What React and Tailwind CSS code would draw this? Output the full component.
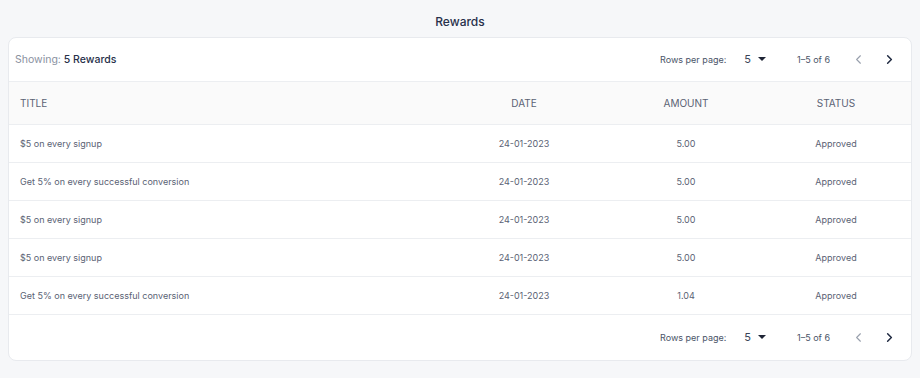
import { ChevronLeft, ChevronRight } from 'lucide-react'

const ROWS = [
  { title: '$5 on every signup', date: '24-01-2023', amount: '5.00', status: 'Approved' },
  { title: 'Get 5% on every successful conversion', date: '24-01-2023', amount: '5.00', status: 'Approved' },
  { title: '$5 on every signup', date: '24-01-2023', amount: '5.00', status: 'Approved' },
  { title: '$5 on every signup', date: '24-01-2023', amount: '5.00', status: 'Approved' },
  { title: 'Get 5% on every successful conversion', date: '24-01-2023', amount: '1.04', status: 'Approved' },
]

// ── Pagination controls ──────────────────────────────────────────────────────
function Pager() {
  return (
    <div className="flex items-center text-[9px] text-[#4a5468]">
      <span>Rows per page:</span>
      <span className="ml-[18px] flex items-center text-[11px] text-[#3b4458]">
        5
        <svg width="8" height="4" viewBox="0 0 8 4" className="ml-[7px] mb-[1px]">
          <path d="M0 0h8L4 4z" fill="#1e2435" />
        </svg>
      </span>
      <span className="ml-[31px]">1–5 of 6</span>
      <ChevronLeft size={15} strokeWidth={1.8} className="ml-[21px] text-[#9aa1ae]" />
      <ChevronRight size={15} strokeWidth={2.4} className="ml-[16px] mr-[14px] text-[#1f2940]" />
    </div>
  )
}

export default function App() {
  return (
    <div className="w-[920px] h-[378px] bg-[#f6f7f9] px-[8px] pt-[13px]" style={{ fontFamily: 'Inter, "Noto Sans", sans-serif' }}>
      <h1 className="text-center text-[12px] font-medium text-[#27304a] leading-[18px]">Rewards</h1>

      <div className="mt-[6px] bg-white border border-[#e8eaee] rounded-[8px] overflow-hidden">
        {/* toolbar */}
        <div className="h-[44px] flex items-center justify-between pl-[6px] border-b border-[#eceef1]">
          <div className="text-[10.5px]">
            <span className="text-[#8a919f]">Showing: </span>
            <span className="font-medium text-[#27304a]">5 Rewards</span>
          </div>
          <Pager />
        </div>

        {/* header */}
        <div className="h-[43px] flex items-center bg-[#fafafa] border-b border-[#eceef1] text-[10px] text-[#5a6274] uppercase pr-[12px]">
          <div className="flex-1 pl-[11px]">Title</div>
          <div className="w-[150px] text-center">Date</div>
          <div className="w-[174px] text-center">Amount</div>
          <div className="w-[126px] text-center">Status</div>
        </div>

        {/* rows */}
        {ROWS.map((r, i) => (
          <div key={i} className="h-[38px] flex items-center border-b border-[#eceef1] text-[9px] text-[#5a6274] pr-[12px]">
            <div className="flex-1 pl-[11px]">{r.title}</div>
            <div className="w-[150px] text-center">{r.date}</div>
            <div className="w-[174px] text-center">{r.amount}</div>
            <div className="w-[126px] text-center">{r.status}</div>
          </div>
        ))}

        {/* footer */}
        <div className="h-[45px] flex items-center justify-end">
          <Pager />
        </div>
      </div>
    </div>
  )
}
